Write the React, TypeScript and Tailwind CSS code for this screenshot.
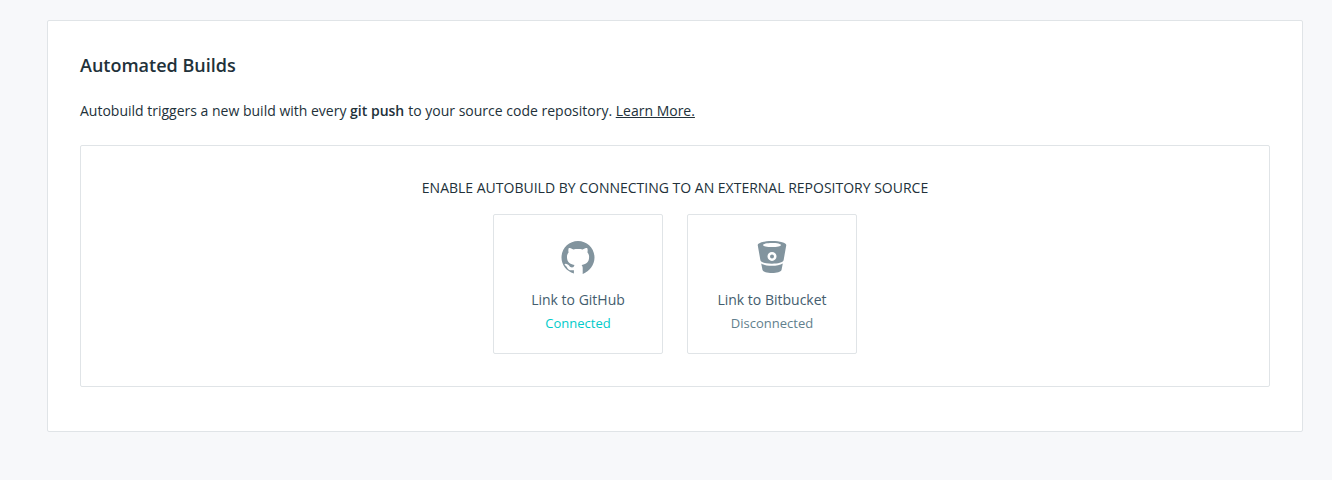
const cards = [
  { name: 'Link to GitHub', status: 'Connected', color: 'text-[#00cbca]', icon: 'github' },
  { name: 'Link to Bitbucket', status: 'Disconnected', color: 'text-[#627f8d]', icon: 'bitbucket' },
];

function GitHubIcon() {
  return (
    <svg width="34" height="33" viewBox="-0.24 0 16.48 16" fill="#82949e">
      <path d="M8 0C3.58 0 0 3.58 0 8c0 3.58 2.4 6.68 6.02 7.72V14.15c-2.15.36-3-.42-3.34-1.3-.18-.46-.5-.82-.95-1.12-.4-.3-.2-.75.25-.75.82 0 1.4.5 1.76 1.07.5.8 1.3.92 2.14.6.07-.52.28-.87.51-1.07-1.78-.2-3.74-.89-3.74-3.95 0-.87.31-1.59.82-2.15-.08-.2-.36-1.02.08-2.12 0 0 .67-.21 2.2.72.64-.18 1.47-.2 2.25-.2s1.61.02 2.25.2c1.53-.94 2.2-.72 2.2-.72.44 1.1.16 1.92.08 2.12.51.56.86 1.27.86 2.15 0 3.07-1.91 3.75-3.69 3.95.29.25.58.73.58 1.48v2.96C13.6 14.68 16 11.58 16 8c0-4.42-3.58-8-8-8z" />
    </svg>
  );
}

function BitbucketIcon() {
  return (
    <svg width="30" height="33" viewBox="0 0 30 33" fill="#82949e">
      <path
        fillRule="evenodd"
        d="M15 0C7 0 .7 1.7.7 4L3.4 19.300c.5 2.100 5.600 3.400 11.600 3.400s11.100-1.300 11.600-3.400L29.300 4C29.300 1.700 23 0 15 0Zm0 1.900c5.200 0 9 .9 9 2.100s-3.800 2.100-9 2.100-9-.9-9-2.100 3.800-2.100 9-2.100Zm0 9a4.500 4.500 0 1 1 0 9 4.500 4.500 0 0 1 0-9Z"
      />
      <circle cx="15" cy="15.400" r="2" />
      <path d="M4.200 22.500C9.200 25.600 20.800 25.600 25.800 22.500L24.500 29c-.7 1.800-4.500 3.100-9.500 3.100S6.200 30.800 5.500 29Z" />
    </svg>
  );
}

export default function App() {
  return (
    <main className="h-[480px] bg-[#f7f8fa] pt-5 pr-[29px] pl-[47px] font-['Open_Sans',sans-serif] text-sm text-[#22313a]">
      <section className="h-[412px] rounded-[2px] border border-[#e0e4e7] bg-white px-8 pt-8">
        <h1 className="text-lg leading-6 font-semibold">Automated Builds</h1>
        <p className="mt-6 leading-5">
          Autobuild triggers a new build with every <strong className="mr-[0.4px] font-semibold">git push</strong> to your source code repository.{' '}
          <a className="underline" href="#">Learn More.</a>
        </p>
        <div className="mt-6 flex h-[242px] flex-col items-center rounded-[2px] border border-[#e0e4e7] pt-8">
          <h2 className="leading-5">ENABLE AUTOBUILD BY CONNECTING TO AN EXTERNAL REPOSITORY SOURCE</h2>
          <div className="mt-4 flex gap-6">
            {cards.map((card) => (
              <div key={card.name} className="flex h-[140px] w-[170px] flex-col items-center rounded-[2px] border border-[#e0e4e7] pt-[26px]">
                {card.icon === 'github' ? <GitHubIcon /> : <BitbucketIcon />}
                <span className="mt-4 leading-5 text-[#445d6e]">{card.name}</span>
                <span className={`mt-[3px] text-[13px] leading-5 ${card.color}`}>{card.status}</span>
              </div>
            ))}
          </div>
        </div>
      </section>
    </main>
  );
}
